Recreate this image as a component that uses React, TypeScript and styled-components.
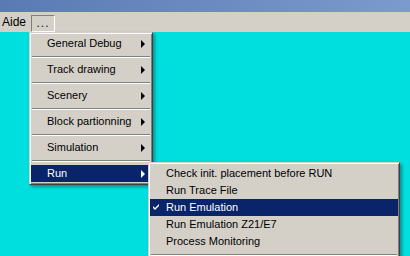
import React from "react";
import styled, { createGlobalStyle } from "styled-components";

const GlobalStyle = createGlobalStyle`
  html, body { margin: 0; padding: 0; }
  body {
    width: 410px;
    height: 256px;
    overflow: hidden;
    font-family: "Liberation Sans", Arial, sans-serif;
    font-size: 11px;
  }
`;

const Screen = styled.div`
  position: relative;
  width: 410px;
  height: 256px;
  display: flex;
  flex-direction: column;
  background: #00dede;
`;

const TitleBar = styled.div`
  height: 12px;
  background: linear-gradient(to right, #5a7ab4, #7b9bcc);
`;

const MenuBar = styled.div`
  height: 20px;
  background: #d4d0c8;
  display: flex;
  align-items: center;
  padding-left: 2px;
  gap: 5px;
`;

const BarItem = styled.div<{ $pressed?: boolean }>`
  height: 17px;
  display: flex;
  align-items: center;
  justify-content: center;
  box-sizing: border-box;
  color: #000;
  font-size: 12px;
  ${(p) =>
    p.$pressed &&
    `
    width: 24px;
    margin-top: 2px;
    letter-spacing: 1px;
    color: #101030;
    border-top: 1px solid #808080;
    border-left: 1px solid #808080;
    border-right: 1px solid #fff;
    border-bottom: 1px solid #fff;
  `}
`;

const Desktop = styled.div`
  flex: 1;
`;

const Menu = styled.div<{ $left: number; $top: number; $width: number }>`
  position: absolute;
  left: ${(p) => p.$left}px;
  top: ${(p) => p.$top}px;
  width: ${(p) => p.$width}px;
  box-sizing: border-box;
  background: #d4d0c8;
  border: 1px solid;
  border-color: #d4d0c8 #404040 #404040 #d4d0c8;
  box-shadow: inset 1px 1px #fff, inset -1px -1px #808080,
    2px 2px 3px rgba(0, 0, 0, 0.35);
  padding: 2px 1px 2px 1px;
  display: flex;
  flex-direction: column;
`;

const Item = styled.div<{ $active?: boolean }>`
  position: relative;
  height: 17px;
  display: flex;
  align-items: center;
  padding: 0 6px 0 16px;
  white-space: nowrap;
  color: ${(p) => (p.$active ? "#fff" : "#000")};
  background: ${(p) => (p.$active ? "#0a246a" : "transparent")};
`;

const Label = styled.span`
  flex: 1;
  margin-top: -1px;
`;

const Arrow = styled.span<{ $active?: boolean }>`
  width: 0;
  height: 0;
  border-top: 4px solid transparent;
  border-bottom: 4px solid transparent;
  border-left: 4px solid ${(p) => (p.$active ? "#fff" : "#000")};
`;

const Check = styled.svg`
  position: absolute;
  left: 3px;
  top: 5px;
`;

const Separator = styled.div`
  height: 9px;
  display: flex;
  align-items: center;
  padding: 0 1px;
  &::after {
    content: "";
    flex: 1;
    height: 0;
    border-top: 1px solid #808080;
    border-bottom: 1px solid #fff;
  }
`;

const mainItems = [
  "General Debug",
  "Track drawing",
  "Scenery",
  "Block partionning",
  "Simulation",
  "Run",
];

const runItems = [
  "Check init. placement before RUN",
  "Run Trace File",
  "Run Emulation",
  "Run Emulation Z21/E7",
  "Process Monitoring",
];

export default function App() {
  return (
    <>
      <GlobalStyle />
      <Screen>
        <TitleBar />
        <MenuBar>
          <BarItem>Aide</BarItem>
          <BarItem $pressed>...</BarItem>
        </MenuBar>
        <Desktop />

        <Menu $left={29} $top={32} $width={124}>
          {mainItems.map((name, i) => (
            <React.Fragment key={name}>
              {i > 0 && <Separator />}
              <Item $active={name === "Run"}>
                <Label>{name}</Label>
                <Arrow $active={name === "Run"} />
              </Item>
            </React.Fragment>
          ))}
        </Menu>

        <Menu $left={148} $top={162} $width={252}>
          {runItems.map((name) => (
            <Item key={name} $active={name === "Run Emulation"}>
              {name === "Run Emulation" && (
                <Check width="7" height="7" viewBox="0 0 7 7">
                  <path d="M0 2 L2 4 L6 0 L6 2 L2 6 L0 4 Z" fill="#fff" />
                </Check>
              )}
              <Label>{name}</Label>
            </Item>
          ))}
          <Separator />
        </Menu>
      </Screen>
    </>
  );
}
